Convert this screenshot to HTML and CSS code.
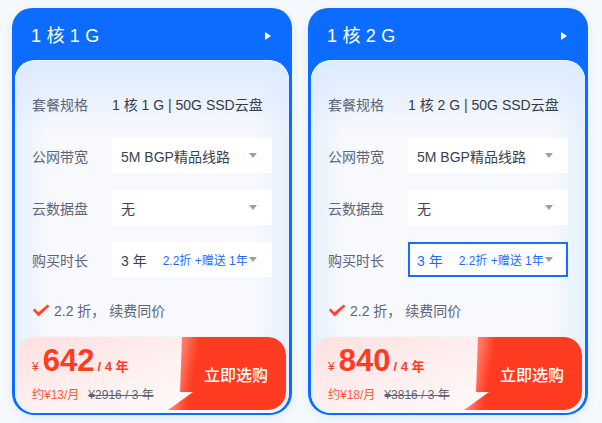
FILE: index.html
```html
<!DOCTYPE html>
<html lang="zh-CN">
<head>
<meta charset="utf-8">
<title>套餐</title>
<link rel="stylesheet" href="styles.css">
</head>
<body>
<div class="page">
  <div class="card">
    <div class="card-head"><span class="title">1 核 1 G</span><span class="arrow"></span></div>
    <div class="panel">
      <div class="row"><span class="label">套餐规格</span><span class="value">1 核 1 G | 50G SSD云盘</span></div>
      <div class="row"><span class="label">公网带宽</span><div class="select"><span class="sel-text">5M BGP精品线路</span><i class="caret"></i></div></div>
      <div class="row"><span class="label">云数据盘</span><div class="select"><span class="sel-text">无</span><i class="caret"></i></div></div>
      <div class="row"><span class="label">购买时长</span><div class="select"><span class="sel-text">3 年</span><span class="promo">2.2折 +赠送 1年</span><i class="caret"></i></div></div>
      <div class="note"><svg class="check" width="18" height="13" viewBox="0 0 18 13"><path d="M0.8 6.2 L2.6 4.6 L6.4 8.2 L15.6 0.4 L17.4 2.2 L6.6 12.4 Z" fill="#ff4633"/></svg><span>2.2 折， 续费同价</span></div>
      <div class="price-box">
        <div class="price-info">
          <div class="price-line"><span class="yen">¥</span><span class="amount">642</span><span class="per">/ 4 年</span></div>
          <div class="sub-line"><span class="monthly">约¥13/月</span><span class="orig">¥2916 / 3 年</span></div>
        </div>
        <div class="buy">立即选购</div>
      </div>
    </div>
  </div>
  <div class="card">
    <div class="card-head"><span class="title">1 核 2 G</span><span class="arrow"></span></div>
    <div class="panel">
      <div class="row"><span class="label">套餐规格</span><span class="value">1 核 2 G | 50G SSD云盘</span></div>
      <div class="row"><span class="label">公网带宽</span><div class="select"><span class="sel-text">5M BGP精品线路</span><i class="caret"></i></div></div>
      <div class="row"><span class="label">云数据盘</span><div class="select"><span class="sel-text">无</span><i class="caret"></i></div></div>
      <div class="row"><span class="label">购买时长</span><div class="select active"><span class="sel-text">3 年</span><span class="promo">2.2折 +赠送 1年</span><i class="caret"></i></div></div>
      <div class="note"><svg class="check" width="18" height="13" viewBox="0 0 18 13"><path d="M0.8 6.2 L2.6 4.6 L6.4 8.2 L15.6 0.4 L17.4 2.2 L6.6 12.4 Z" fill="#ff4633"/></svg><span>2.2 折， 续费同价</span></div>
      <div class="price-box">
        <div class="price-info">
          <div class="price-line"><span class="yen">¥</span><span class="amount">840</span><span class="per">/ 4 年</span></div>
          <div class="sub-line"><span class="monthly">约¥18/月</span><span class="orig">¥3816 / 3 年</span></div>
        </div>
        <div class="buy">立即选购</div>
      </div>
    </div>
  </div>
</div>
</body>
</html>
```

FILE: styles.css
```css
html, body {
  margin: 0;
  padding: 0;
}
body {
  background: #f5f8fc;
  font-family: "Liberation Sans", "Noto Sans CJK SC", sans-serif;
  color: #333;
}
.page {
  display: flex;
  gap: 16px;
  padding: 8px 12px;
}
.card {
  width: 280px;
  height: 407px;
  background: #0b6cff;
  border-radius: 20px 20px 22px 22px;
  display: flex;
  flex-direction: column;
  box-shadow: 0 3px 10px rgba(20, 90, 200, 0.08);
}
.card-head {
  height: 52px;
  box-sizing: border-box;
  flex-shrink: 0;
  display: flex;
  align-items: center;
  justify-content: space-between;
  padding: 3px 21px 0 19px;
  color: #fff;
}
.title {
  font-size: 18px;
  line-height: 20px;
  letter-spacing: 0.2px;
}
.arrow {
  width: 0;
  height: 0;
  border-left: 6px solid #fff;
  border-top: 4.5px solid transparent;
  border-bottom: 4.5px solid transparent;
}
.panel {
  flex: 1;
  margin: 0 3px 2px;
  border-radius: 20px;
  border-top: 1px solid #f0f7ff;
  padding: 25px 3px 3px;
  display: flex;
  flex-direction: column;
  background:
    linear-gradient(180deg, #dcebff 0px, rgba(248, 250, 253, 0) 75px),
    linear-gradient(90deg, #e6f1ff 0px, rgba(248, 250, 253, 0) 34px, rgba(248, 250, 253, 0) calc(100% - 34px), #e6f1ff 100%),
    #f8f9fc;
}
.row {
  height: 35px;
  display: flex;
  align-items: center;
  padding: 0 14px;
  margin-bottom: 17px;
  font-size: 14px;
}
.row:nth-child(4) {
  margin-bottom: 0;
}
.label {
  width: 80px;
  flex-shrink: 0;
  color: #5d6578;
}
.value {
  color: #363b46;
}
.select {
  flex: 1;
  height: 35px;
  box-sizing: border-box;
  background: #fff;
  border: 2px solid transparent;
  display: flex;
  align-items: center;
  padding: 0 13px 0 7px;
  color: #3c4250;
}
.select.active {
  border-color: #1a6dff;
  color: #1a6dff;
}
.promo {
  margin-left: 16px;
  font-size: 12px;
  color: #1a6dff;
}
.caret {
  margin-left: auto;
  width: 0;
  height: 0;
  border-top: 5px solid #9a9da4;
  border-left: 4.5px solid transparent;
  border-right: 4.5px solid transparent;
}
.note {
  height: 20px;
  margin-top: 23px;
  padding: 0 14px;
  display: flex;
  align-items: center;
  gap: 4px;
  font-size: 14px;
  color: #5d6578;
}
.check {
  display: block;
}
.price-box {
  margin-top: 17px;
  height: 73px;
  border-radius: 18px;
  overflow: hidden;
  display: flex;
  background: linear-gradient(160deg, #ffe0e0 0%, #fff0f0 45%, #ffffff 100%);
  box-shadow: 0 -1px 3px rgba(0, 0, 0, 0.03);
}
.price-info {
  flex: 1;
  padding: 9px 0 0 14px;
  display: flex;
  flex-direction: column;
}
.price-line {
  display: flex;
  align-items: baseline;
  height: 30px;
  line-height: 30px;
  color: #ff3b24;
}
.yen {
  font-size: 12px;
  margin-right: 4px;
}
.amount {
  font-size: 31px;
  font-weight: bold;
}
.per {
  font-size: 13px;
  font-weight: bold;
  margin-left: 3px;
}
.sub-line {
  margin-top: 11px;
  display: flex;
  font-size: 12px;
  line-height: 16px;
}
.monthly {
  color: #ff5a3d;
}
.orig {
  margin-left: 9px;
  color: #5d6578;
  text-decoration: line-through;
}
.buy {
  width: 118px;
  flex-shrink: 0;
  box-sizing: border-box;
  padding-left: 18px;
  display: flex;
  align-items: center;
  justify-content: center;
  color: #fff;
  font-size: 16px;
  font-weight: 500;
  border-radius: 0 18px 18px 0;
  background: linear-gradient(100deg, #ff8a78 0px, #ff7763 18px, #ff4c33 27px, #ff3b22 32px);
  clip-path: polygon(14px 0, 100% 0, 100% 100%, 0 100%, 25px 55px, 12px 55px);
}
```
